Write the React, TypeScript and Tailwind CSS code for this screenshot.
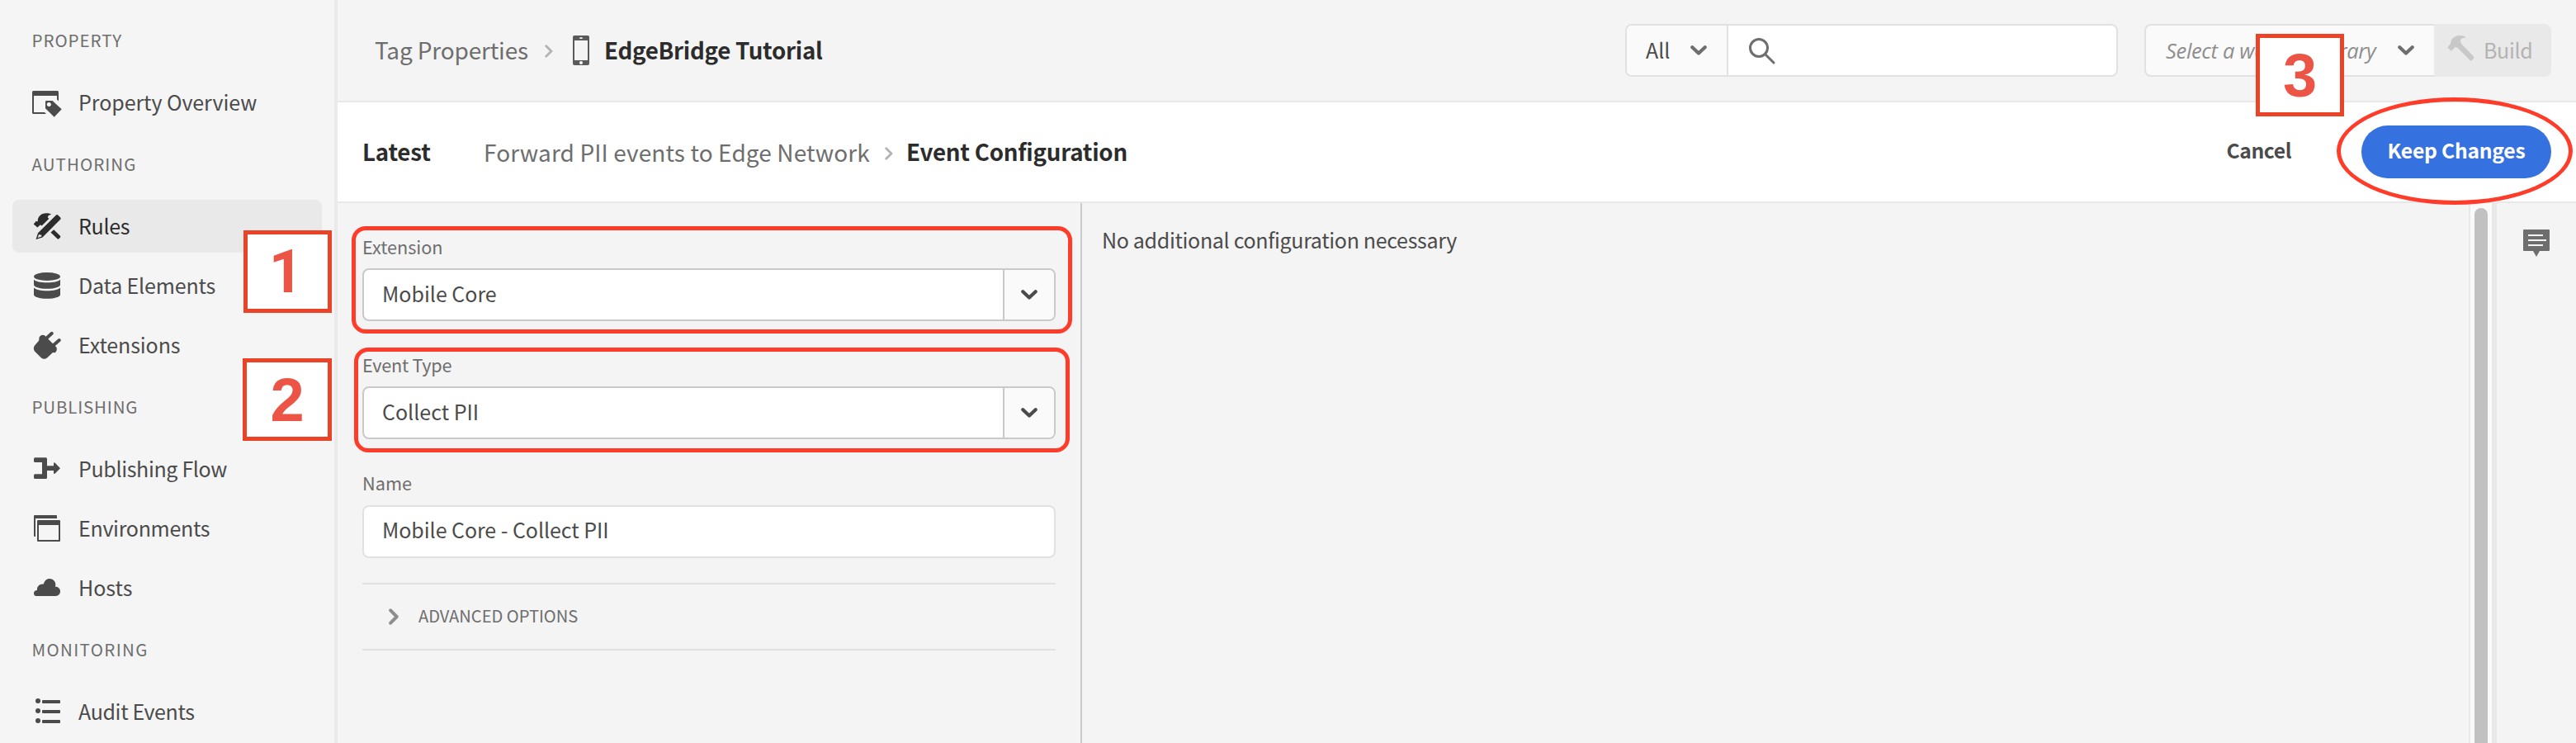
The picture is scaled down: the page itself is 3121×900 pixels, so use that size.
import type { ReactNode } from "react";

function Icon({ children, className = "" }: { children: ReactNode; className?: string }) {
  return (
    <svg viewBox="0 0 36 36" className={`size-9 shrink-0 ${className}`} fill="currentColor" aria-hidden="true">
      {children}
    </svg>
  );
}

const PropertyIcon = (
  <Icon>
    <path d="M1.5 4h29A1.5 1.5 0 0 1 32 5.5V16.5L30 14.5V10H2v20h13l2 2H1.5A1.5 1.5 0 0 1 0 30.500V5.500A1.500 1.500 0 0 1 1.500 4Z" />
    <path
      fillRule="evenodd"
      d="M17.200 16h7.300L35.700 26.300 26.700 35.700 16 25.200V17.200A1.200 1.200 0 0 1 17.200 16Zm3.100 1.900a2.600 2.600 0 1 0 .01 0Z"
    />
  </Icon>
);

const RulesIcon = (
  <Icon>
    <path d="M1.700 15.600 4.600 12 6.800 12.300C6.400 8.500 8.500 5 12 3.200 15.500 1.700 20 1.900 23.300 3.500 20.500 4.300 18.900 5.600 18.800 7.200L20.300 8.900 11.600 17.600 10 16.200 6.300 19.600Z" />
    <path d="M26.200 22.300 34 29.800A1.500 1.500 0 0 1 34 31.600L32.400 33.300A1.500 1.500 0 0 1 30.500 33.300L22.400 25.600Z" />
    <path
      fillRule="evenodd"
      d="M29 4.500A1.600 1.600 0 0 1 31.200 4.500L34.200 7.500A1.600 1.600 0 0 1 34.200 9.700L12.500 31.500 4.500 34 7 26.300ZM8.300 27.400 6.600 32 11.300 30.500 11.200 28.500 9 28.600Z"
    />
  </Icon>
);

const DataIcon = (
  <Icon>
    <ellipse cx="18" cy="7" rx="16" ry="5" />
    <path d="M2 10.400C4 13 10.500 14.200 18 14.200S32 13 34 10.400V17C34 19.600 27 21.800 18 21.800S2 19.600 2 17Z" />
    <path d="M2 20.600C4 23 10.500 24.300 18 24.300S32 23 34 20.600V29C34 31.600 27 33.800 18 33.800S2 31.600 2 29Z" />
  </Icon>
);

const ExtensionsIcon = (
  <Icon>
    <path d="M8.200 12.500 8.500 8.800C9.800 6 12.500 5 15 6.300L29.300 20.500C30.500 23 29.700 25.500 27.800 27.200L25 27 18 33.500Q14.500 36 11 33.500L3 25.500Q.600 22 3 18.500Z" />
    <path d="M17.500 9.500 23.800 3.800M26 18 32.800 12.100" fill="none" stroke="currentColor" strokeWidth="4" strokeLinecap="round" />
  </Icon>
);

const FlowIcon = (
  <Icon>
    <path d="M3.500 4.300H16.500A1.500 1.500 0 0 1 18 5.800V14.300H26V11.500Q26.200 9.600 27.800 10.800L34 17.200 27.800 23.600Q26.200 24.700 26 23V20H18V28.500A1.500 1.500 0 0 1 16.500 30H3.500A1.500 1.500 0 0 1 2 28.500V25.700A1.500 1.500 0 0 1 3.500 24.200H12V10.100H3.500A1.500 1.500 0 0 1 2 8.600V5.800A1.500 1.500 0 0 1 3.500 4.300Z" />
  </Icon>
);

const EnvironmentsIcon = (
  <Icon>
    <path d="M3 2H29A1 1 0 0 1 30 3V6H4V28H3A1 1 0 0 1 2 27V3A1 1 0 0 1 3 2Z" />
    <path fillRule="evenodd" d="M7 8H33A1 1 0 0 1 34 9V33A1 1 0 0 1 33 34H7A1 1 0 0 1 6 33V9A1 1 0 0 1 7 8ZM8 14V32H32V14Z" />
  </Icon>
);

const HostsIcon = (
  <Icon>
    <path d="M5 28A3.400 3.400 0 0 1 2 24.500C2 22.300 3.800 20.900 6 21 5.400 16.500 9 12.900 13.800 13.600 14.800 9.500 17.500 7 21 7 26 7 29.500 11.500 28 16.800 31.800 16.600 34 19.200 34 22.300 34 25.500 31.500 28 28.500 28Z" />
  </Icon>
);

const AuditIcon = (
  <Icon>
    <circle cx="7" cy="5" r="3" />
    <circle cx="7" cy="17" r="3" />
    <circle cx="7" cy="29" r="3" />
    <rect x="12" y="4" width="22" height="4" rx="1" />
    <rect x="12" y="16" width="22" height="4" rx="1" />
    <rect x="12" y="28" width="22" height="4" rx="1" />
  </Icon>
);

type NavItem = { label: string; icon: ReactNode; track: string; active?: boolean };
type NavSection = { title: string; track: string; items: NavItem[] };

const sections: NavSection[] = [
  {
    title: "PROPERTY",
    track: "tracking-[0.97px] mt-1.5",
    items: [{ label: "Property Overview", icon: PropertyIcon, track: "tracking-[-0.06px]" }],
  },
  {
    title: "AUTHORING",
    track: "tracking-[1.07px]",
    items: [
      { label: "Rules", icon: RulesIcon, track: "tracking-[-0.3px]", active: true },
      { label: "Data Elements", icon: DataIcon, track: "tracking-[-0.17px]" },
      { label: "Extensions", icon: ExtensionsIcon, track: "tracking-[-0.11px]" },
    ],
  },
  {
    title: "PUBLISHING",
    track: "tracking-[0.83px]",
    items: [
      { label: "Publishing Flow", icon: FlowIcon, track: "tracking-[-0.34px]" },
      { label: "Environments", icon: EnvironmentsIcon, track: "tracking-[-0.3px]" },
      { label: "Hosts", icon: HostsIcon, track: "tracking-normal" },
    ],
  },
  {
    title: "MONITORING",
    track: "tracking-[1.36px]",
    items: [{ label: "Audit Events", icon: AuditIcon, track: "tracking-[-0.36px]" }],
  },
];

function Sidebar() {
  return (
    <nav className="h-full w-[409px] shrink-0 overflow-hidden border-r-4 border-[#eaeaea] bg-[#f5f5f5]">
      {sections.map((s) => (
        <section key={s.title}>
          <h2 className={`h-[86px] pt-[22px] pl-[38.500px] text-[20.5px] leading-10 text-[#6e6e6e] ${s.track}`}>{s.title}</h2>
          <ul className="flex flex-col gap-2 px-[15px]">
            {s.items.map((i) => (
              <li
                key={i.label}
                className={`flex h-16 items-center gap-5 rounded-lg pl-6 ${i.active ? "bg-[#e9e9e9] text-[#2c2c2c]" : "text-[#4b4b4b]"}`}
              >
                {i.icon}
                <span className={`pb-0.5 text-[25px] leading-[62px] ${i.track}`}>{i.label}</span>
              </li>
            ))}
          </ul>
        </section>
      ))}
    </nav>
  );
}

function ChevronDown({ className }: { className: string }) {
  return (
    <svg viewBox="0 0 20 12" className={`h-3 w-5 shrink-0 ${className}`} fill="none" stroke="currentColor" strokeWidth="4.200" strokeLinecap="round" strokeLinejoin="round" aria-hidden="true">
      <path d="M2.300 2.300 10 9.600 17.700 2.300" />
    </svg>
  );
}

function Crumb({ className }: { className: string }) {
  return (
    <svg viewBox="0 0 10 16" className={`h-4 w-2.5 shrink-0 text-[#b3b3b3] ${className}`} fill="none" stroke="currentColor" strokeWidth="2.800" strokeLinecap="round" strokeLinejoin="round" aria-hidden="true">
      <path d="M1.700 1.700 8 8 1.700 14.300" />
    </svg>
  );
}

function Badge({ n, className }: { n: string; className: string }) {
  return (
    <div className={`absolute flex items-center justify-center border-[5px] border-[#ea4327] bg-white pt-0.5 leading-none font-bold text-[#ec5545] ${className}`}>
      {n}
    </div>
  );
}

function TopBar() {
  return (
    <header className="flex h-[124px] items-center border-b-2 border-[#e8e8e8] pr-[30px] pl-[45px]">
      <span className="w-[206px] pb-[3px] text-[28px] leading-[60px] tracking-[-0.16px] text-[#6e6e6e]">Tag Properties</span>
      <Crumb className="mt-0.5" />
      <svg viewBox="0 0 20 36" className="ml-6 h-9 w-5 shrink-0 text-[#5a5a5a]" fill="currentColor" aria-hidden="true">
        <path fillRule="evenodd" d="M2 0H18A2 2 0 0 1 20 2V34A2 2 0 0 1 18 36H2A2 2 0 0 1 0 34V2A2 2 0 0 1 2 0ZM2 6V30H18V6ZM8.300 2.200V3.900H11.700V2.200ZM10 31A2 2 0 1 0 10.010 31Z" />
      </svg>
      <span className="ml-[18px] pb-[3px] text-[27.7px] leading-[60px] font-bold tracking-[-0.28px] text-[#2c2c2c]">EdgeBridge Tutorial</span>

      <div className="ml-auto flex h-16 w-[597px] shrink-0 overflow-hidden rounded-lg border-2 border-[#e1e1e1] bg-white">
        <div className="flex w-[123px] items-center border-r-2 border-[#e1e1e1] bg-[#fafafa] pl-[23px] text-[#4b4b4b]">
          <span className="w-[54px] pb-0.5 text-[25px] leading-[58px]">All</span>
          <ChevronDown className="text-[#6e6e6e]" />
        </div>
        <svg viewBox="0 0 36 36" className="mt-3 ml-[23px] size-9 text-[#6e6e6e]" fill="none" stroke="currentColor" strokeWidth="3" strokeLinecap="round" aria-hidden="true">
          <circle cx="14" cy="15" r="10.500" />
          <path d="M21.700 22.700 32 33" />
        </svg>
      </div>

      <div className="ml-8 flex h-16 shrink-0">
        <div className="flex w-[351px] items-center justify-between rounded-l-lg border-2 border-r-0 border-[#e1e1e1] bg-[#fafafa] pr-6 pl-6">
          <span className="font-['Open_Sans','Noto_Sans',sans-serif] text-[25.500px] leading-[60px] tracking-[-0.330px] whitespace-nowrap text-[#8e8e8e] italic">
            Select a working library
          </span>
          <ChevronDown className="text-[#6e6e6e]" />
        </div>
        <div className="flex w-[142px] items-center rounded-r-lg bg-[#e9e9e9] pl-4 text-[#b3b3b3]">
          <svg viewBox="0 0 34 34" className="mb-1 size-[34px] shrink-0 text-[#c8c8c8]" fill="currentColor" aria-hidden="true">
            <path d="M.300 15.500 4 10.800C4.500 5 8.500 1.500 14.500 1 18 .800 21 1.500 23 3.500 19 3.300 16.500 4.500 15.800 7.200L17 11 32 26.600A1.600 1.600 0 0 1 32 28.800L29.800 31A1.600 1.600 0 0 1 27.600 31L12.500 15.800 9.500 15 5 19.900Z" />
          </svg>
          <span className="ml-2.5 pb-0.5 text-[25px] leading-[62px] tracking-[-0.33px]">Build</span>
        </div>
      </div>
    </header>
  );
}

function ActionBar() {
  return (
    <div className="flex h-[122px] items-center border-b-2 border-[#e8e8e8] bg-white pr-[30px] pl-[30px]">
      <span className="w-[147px] pb-0.5 text-[27.7px] leading-[60px] font-bold tracking-[-0.2px] text-[#2c2c2c]">Latest</span>
      <span className="w-[486px] pb-px text-[28px] leading-[60px] tracking-[0.11px] whitespace-nowrap text-[#6e6e6e]">
        Forward PII events to Edge Network
      </span>
      <Crumb className="mt-1" />
      <span className="ml-4 pb-0.5 text-[27.7px] leading-[60px] font-bold tracking-[-0.24px] text-[#2c2c2c]">Event Configuration</span>
      <button className="ml-auto pb-1.5 text-[24.7px] leading-[58px] font-bold tracking-[-0.42px] text-[#4b4b4b]">Cancel</button>
      <div className="relative ml-[85px]">
        <button className="block h-16 w-[230px] rounded-full bg-[#3671e0] pb-1.5 text-[24.7px] leading-[58px] font-bold tracking-[-0.26px] text-white">
          Keep Changes
        </button>
        <div className="absolute -top-[34px] -left-[30px] h-[130px] w-[286px] rounded-[50%] border-[5px] border-[#ff3b2a]" />
      </div>
    </div>
  );
}

function SelectField({ label, value, track, ring }: { label: string; value: string; track: string; ring: string }) {
  return (
    <div className="relative mb-9">
      <label className={`block pt-px text-[21.7px] leading-8 text-[#6e6e6e] ${track}`}>{label}</label>
      <div className="mt-2.5 flex h-16 overflow-hidden rounded-lg border-2 border-[#c9c9c9] bg-white">
        <span className="flex-1 pb-1 pl-[22px] text-[25px] leading-[56px] text-[#4b4b4b]">{value}</span>
        <span className="flex w-[62px] items-center justify-center border-l-2 border-[#c9c9c9] bg-[#fafafa]">
          <ChevronDown className="text-[#4b4b4b]" />
        </span>
      </div>
      <div className={`absolute rounded-[17px] border-[5px] border-[#ff3b2a] ${ring}`} />
    </div>
  );
}

function EventForm() {
  return (
    <div className="w-[902px] shrink-0 border-r-2 border-[#c9c9c9] pt-9 pr-[30px] pl-[30px]">
      <SelectField label="Extension" value="Mobile Core" track="tracking-[-0.04px]" ring="-top-2 -left-[13px] h-[130px] w-[873px]" />
      <SelectField label="Event Type" value="Collect PII" track="tracking-[-0.27px]" ring="-top-1 -left-2.5 h-[127px] w-[867px]" />
      <label className="block pt-px text-[21.7px] leading-8 text-[#6e6e6e]">Name</label>
      <div className="mt-[11px] h-16 rounded-lg border-2 border-[#e1e1e1] bg-white pl-[22px] text-[25px] leading-[55px] tracking-[-0.05px] text-[#4b4b4b]">
        Mobile Core - Collect PII
      </div>
      <div className="mt-[30px] flex h-[82px] items-center border-y-2 border-[#e1e1e1] pl-8">
        <svg viewBox="0 0 12 20" className="h-5 w-3 text-[#8e8e8e]" fill="none" stroke="currentColor" strokeWidth="4" strokeLinecap="round" strokeLinejoin="round" aria-hidden="true">
          <path d="M2.200 2.300 9.700 10 2.200 17.700" />
        </svg>
        <span className="ml-6 pb-0.5 text-[20.1px] leading-8 text-[#6e6e6e]">ADVANCED OPTIONS</span>
      </div>
    </div>
  );
}

export default function App() {
  return (
    <div className="relative flex h-[900px] w-[3121px] overflow-hidden bg-[#f4f4f4] font-['Noto_Sans_CJK_SC','Noto_Sans',sans-serif]">
      <Sidebar />
      <div className="flex min-w-0 flex-1 flex-col">
        <TopBar />
        <ActionBar />
        <div className="flex min-h-0 flex-1">
          <EventForm />
          <p className="flex-1 pt-[26px] pl-6 text-[25px] leading-9 tracking-[-0.33px] text-[#4b4b4b]">No additional configuration necessary</p>
          <div className="flex w-[34px] shrink-0 justify-center border-r-[6px] border-l-2 border-[#e8e8e8] bg-[#fafafa] pt-1.5">
            <div className="h-full w-4 rounded-t-full bg-[#c1c1c1]" />
          </div>
          <aside className="flex w-24 shrink-0 justify-center pt-8">
            <svg viewBox="0 0 32 33" className="h-[33px] w-8 text-[#6e6e6e]" aria-hidden="true">
              <path fill="currentColor" d="M1 0H31A1 1 0 0 1 32 1V25A1 1 0 0 1 31 26H20L16 33 12 26H1A1 1 0 0 1 0 25V1A1 1 0 0 1 1 0Z" />
              <path stroke="#f4f4f4" strokeWidth="2" d="M6 7H24M6 13H28M6 19H24" />
            </svg>
          </aside>
        </div>
      </div>
      <Badge n="1" className="top-[279px] left-[295px] h-[100px] w-[107px] pr-1 font-['Roboto',sans-serif] text-[72px]" />
      <Badge n="2" className="top-[434px] left-[294px] h-[100px] w-[108px] font-['Liberation_Sans',Arial,sans-serif] text-[74px]" />
      <Badge n="3" className="top-[41px] left-[2733px] h-[100px] w-[107px] font-['Liberation_Sans',Arial,sans-serif] text-[74px]" />
    </div>
  );
}
